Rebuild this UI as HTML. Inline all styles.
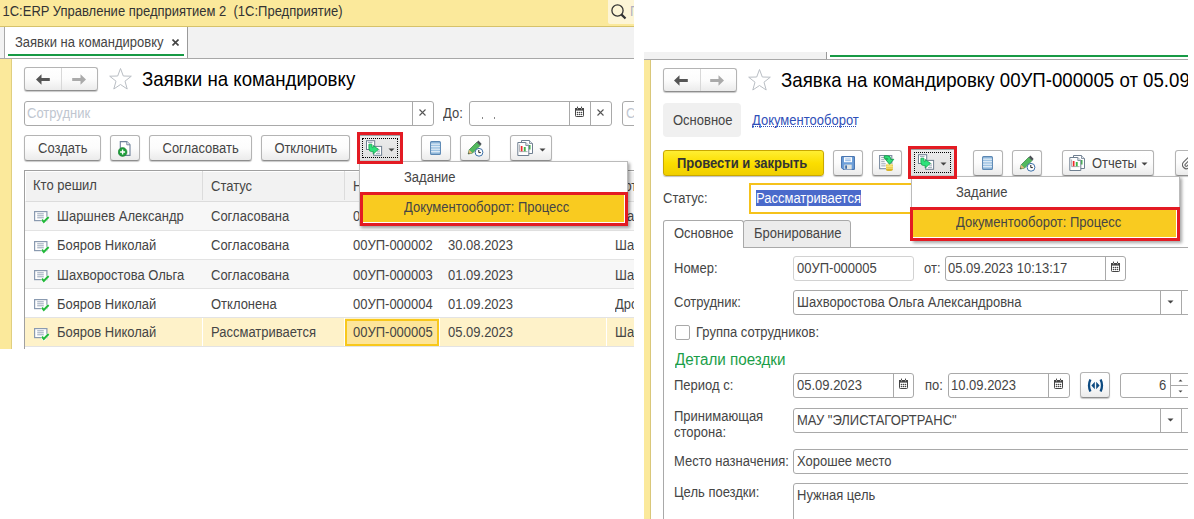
<!DOCTYPE html>
<html><head><meta charset="utf-8">
<style>
*{box-sizing:border-box;margin:0;padding:0}
html,body{width:1194px;height:519px;overflow:hidden;background:#fff;font-family:"Liberation Sans",sans-serif;font-size:13px;color:#454545}
.a{position:absolute}
.t{position:absolute;white-space:nowrap;line-height:15px;height:15px;transform:scaleY(1.08);transform-origin:0 12px}
.btn{position:absolute;border:1px solid #b4b4b4;border-bottom-color:#8e8e8e;border-radius:3px;background:linear-gradient(#fff,#fcfcfc 50%,#ebebeb);box-shadow:0 1px 1px rgba(0,0,0,.22)}
.inp{position:absolute;border:1px solid #a9a9a9;border-radius:3px;background:#fff}
.sep{position:absolute;top:0;bottom:0;width:1px;background:#a9a9a9}
</style></head>
<body>
<svg width="0" height="0" style="position:absolute"><defs>
<symbol id="docok" viewBox="0 0 17 14"><rect x="1.6" y="1.6" width="12.3" height="9" fill="#fff" stroke="#8a9ab0" stroke-width="1.2"/><path d="M4.2 3.8h6.6M4.2 5.8h6.6M4.2 7.8h6.6" stroke="#8a9ab0" stroke-width=".9"/><path d="M9 9.6 L10.8 12 L15.6 7" fill="none" stroke="#fff" stroke-width="3.2"/><path d="M9 9.6 L10.8 12 L15.6 7" fill="none" stroke="#22b83a" stroke-width="2"/></symbol>
<symbol id="xm" viewBox="0 0 7 7"><path d="M0.5 0.5L6.5 6.5M6.5 0.5L0.5 6.5" stroke="#444" stroke-width="1.6"/></symbol>
<symbol id="xs" viewBox="0 0 9 9"><path d="M1 1L8 8M8 1L1 8" stroke="#555" stroke-width="1.2"/></symbol>
<symbol id="cal" viewBox="0 0 10 11"><rect x=".5" y="2.5" width="8" height="8" rx=".8" fill="#fff" stroke="#444" stroke-width="1"/><rect x="0" y="2" width="9" height="2.6" fill="#444"/><rect x="2" y=".6" width="1" height="2" fill="#444"/><rect x="6" y=".6" width="1" height="2" fill="#444"/><rect x="2.1" y="2.4" width=".8" height=".8" fill="#fff"/><rect x="6.1" y="2.4" width=".8" height=".8" fill="#fff"/><g fill="#444"><circle cx="2.5" cy="6.5" r=".8"/><circle cx="4.5" cy="6.5" r=".8"/><circle cx="6.5" cy="6.5" r=".8"/><circle cx="2.5" cy="8.5" r=".8"/><circle cx="4.5" cy="8.5" r=".8"/><circle cx="6.5" cy="8.5" r=".8"/></g></symbol>
<symbol id="tri" viewBox="0 0 7 4"><path d="M0.5 0.5H6.5L3.5 3.5Z" fill="#444"/></symbol>
<symbol id="bp" viewBox="0 0 18 18"><rect x="1.5" y="1.7" width="8.2" height="8.8" fill="#fff" stroke="#6e7f91" stroke-width="1"/><path d="M3 3.4h4.5" stroke="#8d9bab" stroke-width=".9"/><rect x="8.7" y="7.4" width="7.9" height="8.9" fill="#fff" stroke="#6e7f91" stroke-width="1"/><path d="M12 11h3M12 12.8h3M11 14.6h4" stroke="#8d9bab" stroke-width=".8"/><path d="M3.9 5.2H6.9V8Q6.9 8.6 7.6 8.6H8V6.5L13.5 10.3L8.2 15V12.6H6.8Q3.9 12.6 3.9 9.6Z" fill="#2ee27a" stroke="#17a04e" stroke-width=".8" stroke-linejoin="round"/></symbol>
<symbol id="list" viewBox="0 0 11 14"><rect x="0.6" y="0.6" width="9.8" height="12.8" rx="1" fill="#9ec3e3" stroke="#5b87b3" stroke-width="1.1"/><path d="M1 3.2h9M1 5.7h9M1 8.2h9M1 10.7h9" stroke="#eaf2f9" stroke-width="1"/></symbol>
<symbol id="pen" viewBox="0 0 18 17"><path d="M2.2 14l1-4.2 7.6-7.6 3.3 3.3-7.6 7.6z" fill="#52b95e" stroke="#2e7d3a" stroke-width=".7"/><path d="M10.8 2.2l1.6-1.6 3.3 3.3-1.6 1.6z" fill="#4a4f55"/><path d="M2.2 14l1-4.2 3.2 3.2z" fill="#e6b97e"/><path d="M2.2 14l.4-1.6 1.2 1.2z" fill="#333"/><circle cx="13" cy="12.3" r="3.9" fill="#fff" stroke="#3a6fa8" stroke-width="1"/><path d="M12.8 10v2.6h2" fill="none" stroke="#222" stroke-width="1"/></symbol>
<symbol id="rep" viewBox="0 0 17 16"><path d="M4.5 0.5h8l3 3v10h-11z" fill="#fff" stroke="#6f7f90" stroke-width="1"/><path d="M12.5 0.5v3h3" fill="#dfe4ea" stroke="#6f7f90" stroke-width=".8"/><rect x="11.5" y="5" width="2" height="4.5" fill="#3fb548"/><path d="M0.8 2.5h8l3 3v10h-11z" fill="#fff" stroke="#6f7f90" stroke-width="1"/><path d="M8.8 2.5v3h3" fill="#dfe4ea" stroke="#6f7f90" stroke-width=".8"/><path d="M2.6 4.5V11.6H10.5" fill="none" stroke="#8a8f96" stroke-width=".7"/><rect x="3.8" y="6" width="1.7" height="5.3" fill="#ee2b2b"/><rect x="6.8" y="7" width="1.9" height="4.3" fill="#3fb548"/></symbol>
<symbol id="save" viewBox="0 0 14 14"><path d="M0.6 0.6h12.8v12.8h-11.3l-1.5-1.5z" fill="#6d9fd9" stroke="#3f6daa" stroke-width="1"/><rect x="3" y="1.2" width="8" height="5" fill="#fff"/><path d="M4.2 3h5.6M4.2 4.7h5.6" stroke="#6d9fd9" stroke-width=".8"/><rect x="3.3" y="8.6" width="7.4" height="4.8" fill="#dfe3e2"/><rect x="4.2" y="9.4" width="1.8" height="3.4" fill="#3f6daa"/></symbol>
<symbol id="post" viewBox="0 0 17 17"><rect x="0.6" y="0.5" width="12.2" height="13.2" fill="#fff" stroke="#7b8ca0" stroke-width="1.1"/><path d="M2.2 2.6h3M2.2 4.7h3.5M2.2 6.7h3.5M2.2 8.8h4.5M2.2 10.9h4.5" stroke="#8d9bab" stroke-width=".9"/><rect x="7" y="9.6" width="6.8" height="5.2" fill="#e9c93a"/><ellipse cx="10.4" cy="14.8" rx="3.4" ry="1.3" fill="#d9b52a"/><ellipse cx="10.4" cy="9.6" rx="3.4" ry="1.2" fill="#f8e58a"/><path d="M7 11.5h6.8M7 13.2h6.8" stroke="#fff3b0" stroke-width=".6"/><path d="M5.3 0.8H8.6Q11.6 0.8 11.6 3.8V4.3H14.8L10.6 9.3L6.4 4.3H8.8V4Q8.8 3.4 8.2 3.4H5.3Z" fill="#2ee27a" stroke="#139847" stroke-width=".9" stroke-linejoin="round"/></symbol>
<symbol id="docplus" viewBox="0 0 14 16"><path d="M2.3 0.6h6.5l3.2 3.2v10.6h-9.7z" fill="#fff" stroke="#6d809a" stroke-width="1.1"/><path d="M8.8 0.6v3.2h3.2" fill="#e8edf3" stroke="#6d809a" stroke-width=".9"/><circle cx="4.6" cy="11" r="4.4" fill="#1e9e3a" stroke="#157a2c" stroke-width=".6"/><path d="M4.6 8.5v5M2.1 11h5" stroke="#fff" stroke-width="1.4"/></symbol>
<symbol id="swap" viewBox="0 0 17 13"><path d="M3.4 0.6Q0.6 6.5 3.4 12.4M13.6 0.6Q16.4 6.5 13.6 12.4" fill="none" stroke="#0d4a80" stroke-width="2.3"/><path d="M7.8 2.8v7.4l-3.4-3.7z M9.2 2.8v7.4l3.4-3.7z" fill="#0d4a80"/></symbol>
</defs></svg>
<!-- ============ LEFT SCREEN ============ -->
<div class="a" style="left:0;top:0;width:634px;height:349px;overflow:hidden">
  <!-- title bar -->
  <div class="a" style="left:0;top:0;width:634px;height:27px;background:#fbe99b;border-bottom:1px solid #d6c26a"></div>
  <div class="t" style="left:2.5px;top:4px;color:#333">1C:ERP Управление предприятием 2&nbsp; (1С:Предприятие)</div>
  <div class="a" style="left:608px;top:0;width:30px;height:24px;background:#fdf5d6;border-radius:0 0 0 2px"></div>
  <div class="t" style="left:630px;top:4px;color:#b0b0c0">П</div>
  <svg class="a" style="left:610px;top:3px" width="18" height="18" viewBox="0 0 18 18"><circle cx="7.5" cy="7.5" r="5.6" fill="none" stroke="#333" stroke-width="1.3"/><path d="M11.6 11.6 L15.5 15.5" stroke="#333" stroke-width="2.2"/></svg>
  <!-- tab bar -->
  <div class="a" style="left:0;top:27px;width:634px;height:32px;background:#f2f2f2;border-bottom:1px solid #a8a8a8"></div>
  <div class="a" style="left:4px;top:27px;width:184px;height:31px;background:#fff;border-left:1px solid #a8a8a8;border-right:1px solid #9a9a9a"></div>
  <div class="a" style="left:8px;top:54px;width:176px;height:2px;background:#179a45"></div>
  <div class="t" style="left:15px;top:35px">Заявки на командировку</div>
  <svg class="a" style="left:172px;top:39px" width="7" height="7"><use href="#xm"/></svg>
  <!-- yellow strip -->
  <div class="a" style="left:0;top:59px;width:12px;height:290px;background:#fbe99b;border-right:1px solid #e0cf80"></div>
  <!-- nav -->
  <div class="btn" style="left:24px;top:67px;width:74px;height:24px"></div>
  <div class="a" style="left:61px;top:68px;width:1px;height:22px;background:#d8d8d8"></div>
  <svg class="a" style="left:35px;top:73px" width="16" height="14" viewBox="0 0 16 14"><path d="M1 6.5L6.5 1.2V5H14.8V8H6.5V11.7Z" fill="#555"/></svg>
  <svg class="a" style="left:71px;top:73px" width="16" height="14" viewBox="0 0 16 14"><path d="M15 6.5L9.5 1.2V5H1.2V8H9.5V11.7Z" fill="#aaa"/></svg>
  <svg class="a" style="left:108px;top:67px" width="25" height="24" viewBox="0 0 25 24"><path d="M12.5 1.5 L15.3 9 L23.3 9.2 L17 14.2 L19.2 22 L12.5 17.5 L5.8 22 L8 14.2 L1.7 9.2 L9.7 9 Z" fill="#fff" stroke="#b9bec4" stroke-width="1"/></svg>
  <div class="t" style="left:142px;top:69px;font-size:18.67px;line-height:22px;height:22px;color:#000;transform-origin:0 17.5px">Заявки на командировку</div>
  <!-- filters -->
  <div class="inp" style="left:24px;top:101px;width:410px;height:25px"><div class="sep" style="left:387px"></div></div>
  <div class="t" style="left:27px;top:106px;color:#c0c6d0">Сотрудник</div>
  <svg class="a" style="left:419px;top:109px" width="7" height="7" viewBox="0 0 7 7"><path d="M.5 .5l6 6M6.5 .5l-6 6" stroke="#555" stroke-width="1.1"/></svg>
  <div class="t" style="left:443px;top:106px">До:</div>
  <div class="inp" style="left:469px;top:101px;width:143px;height:25px"><div class="sep" style="left:99px"></div><div class="sep" style="left:120px"></div></div>
  <div class="a" style="left:482px;top:117px;width:1px;height:2px;background:#888"></div><div class="a" style="left:494px;top:117px;width:1px;height:2px;background:#888"></div>
  <svg class="a" style="left:575px;top:106px" width="10" height="11"><use href="#cal"/></svg>
  <svg class="a" style="left:597px;top:109px" width="7" height="7" viewBox="0 0 7 7"><path d="M.5 .5l6 6M6.5 .5l-6 6" stroke="#555" stroke-width="1.1"/></svg>
  <div class="inp" style="left:622px;top:101px;width:30px;height:25px"></div>
  <div class="t" style="left:626px;top:106px;color:#c0c6d0">С</div>
  <!-- buttons -->
  <div class="btn" style="left:24px;top:135px;width:77px;height:26px"></div>
  <div class="t" style="left:38px;top:141px">Создать</div>
  <div class="btn" style="left:110px;top:135px;width:30px;height:26px"></div>
  <svg class="a" style="left:118px;top:141px" width="14" height="16"><use href="#docplus"/></svg>
  <div class="btn" style="left:149px;top:135px;width:103px;height:26px"></div>
  <div class="t" style="left:162.5px;top:141px">Согласовать</div>
  <div class="btn" style="left:261px;top:135px;width:89px;height:26px"></div>
  <div class="t" style="left:274.5px;top:141px;letter-spacing:-0.15px">Отклонить</div>
  <div class="a" style="z-index:5;left:357px;top:132px;width:46px;height:32px;border:3px solid #e31b23;background:linear-gradient(#ececec,#e0e0e0)"><div class="a" style="left:0;top:0;right:0;height:1px;background:#9aa3a3"></div><div class="a" style="left:0;bottom:0;right:0;height:1px;background:#c8c8c8"></div><div class="a" style="left:2px;top:3px;width:36px;height:20px;border:1px dotted #000"></div></div>
  <svg class="a" style="z-index:6;left:365px;top:139px" width="18" height="18"><use href="#bp"/></svg>
  <svg class="a" style="z-index:6;left:388px;top:148px" width="7" height="4"><use href="#tri"/></svg>
  <div class="btn" style="left:421px;top:135px;width:30px;height:26px"></div>
  <svg class="a" style="left:430px;top:141px" width="11" height="14"><use href="#list"/></svg>
  <div class="btn" style="left:460px;top:135px;width:30px;height:26px"></div>
  <svg class="a" style="left:466px;top:140px" width="18" height="17"><use href="#pen"/></svg>
  <div class="btn" style="left:510px;top:135px;width:42px;height:26px"></div>
  <svg class="a" style="left:517px;top:140px" width="17" height="16"><use href="#rep"/></svg>
  <svg class="a" style="left:539px;top:148px" width="7" height="4"><use href="#tri"/></svg>
  <!-- table -->
  <div class="a" style="left:24px;top:170px;width:620px;height:180px;border-left:1px solid #a0a0a0;border-top:1px solid #a0a0a0"></div>
  <div class="a" style="left:25px;top:171px;width:620px;height:31px;background:#f2f2f2;border-top:1px solid #fff;border-left:1px solid #fff;border-bottom:1px solid #dcdcdc"></div>
  <div class="a" style="left:202px;top:171px;width:1px;height:29px;background:#dcdcdc"></div>
  <div class="a" style="left:344px;top:171px;width:1px;height:29px;background:#dcdcdc"></div>
  <div class="t" style="left:33px;top:178px">Кто решил</div>
  <div class="t" style="left:211px;top:179px">Статус</div>
  <div class="t" style="left:353px;top:179px">Номер</div>
  <div class="t" style="left:448px;top:179px">Дата</div>
  <div class="t" style="left:615px;top:179px">Сотрудник</div>
  <div class="a" style="left:25px;top:202px;width:620px;height:28px;background:#f7f7f7"></div>
  <div class="a" style="left:25px;top:230px;width:620px;height:1px;background:#e3e3e3"></div>
  <svg class="a" style="left:33px;top:210px" width="17" height="14"><use href="#docok"/></svg>
  <div class="t" style="left:57px;top:209px">Шаршнев Александр</div>
  <div class="t" style="left:211px;top:209px">Согласована</div>
  <div class="t" style="left:353px;top:209px">00УП-000001</div>
  <div class="t" style="left:448px;top:209px">28.08.2023</div>
  <div class="t" style="left:615px;top:209px">Шахворостова Ольга</div>
  <div class="a" style="left:25px;top:231px;width:620px;height:28px;background:#fff"></div>
  <div class="a" style="left:25px;top:259px;width:620px;height:1px;background:#e3e3e3"></div>
  <svg class="a" style="left:33px;top:240px" width="17" height="14"><use href="#docok"/></svg>
  <div class="t" style="left:57px;top:238px">Бояров Николай</div>
  <div class="t" style="left:211px;top:238px">Согласована</div>
  <div class="t" style="left:353px;top:238px">00УП-000002</div>
  <div class="t" style="left:448px;top:238px">30.08.2023</div>
  <div class="t" style="left:615px;top:238px">Шахворостова Ольга</div>
  <div class="a" style="left:25px;top:260px;width:620px;height:28px;background:#f7f7f7"></div>
  <div class="a" style="left:25px;top:288px;width:620px;height:1px;background:#e3e3e3"></div>
  <svg class="a" style="left:33px;top:269px" width="17" height="14"><use href="#docok"/></svg>
  <div class="t" style="left:57px;top:268px">Шахворостова Ольга</div>
  <div class="t" style="left:211px;top:268px">Согласована</div>
  <div class="t" style="left:353px;top:268px">00УП-000003</div>
  <div class="t" style="left:448px;top:268px">01.09.2023</div>
  <div class="t" style="left:615px;top:268px">Шахворостова Ольга</div>
  <div class="a" style="left:25px;top:289px;width:620px;height:28px;background:#fff"></div>
  <div class="a" style="left:25px;top:317px;width:620px;height:1px;background:#e3e3e3"></div>
  <svg class="a" style="left:33px;top:298px" width="17" height="14"><use href="#docok"/></svg>
  <div class="t" style="left:57px;top:297px">Бояров Николай</div>
  <div class="t" style="left:211px;top:297px">Отклонена</div>
  <div class="t" style="left:353px;top:297px">00УП-000004</div>
  <div class="t" style="left:448px;top:297px">01.09.2023</div>
  <div class="t" style="left:615px;top:297px">Дроздов</div>
  <div class="a" style="left:25px;top:318px;width:620px;height:28px;background:#fef2c9"></div>
  <div class="a" style="left:25px;top:346px;width:620px;height:1px;background:#e3e3e3"></div>
  <div class="a" style="left:202px;top:318px;width:1px;height:28px;background:#fff"></div>
  <div class="a" style="left:344px;top:318px;width:1px;height:28px;background:#fff"></div>
  <div class="a" style="left:345px;top:319px;width:94px;height:27px;background:#fde59a;border:2px solid #f8c81c"></div>
  <div class="a" style="left:439px;top:318px;width:1px;height:28px;background:#fff"></div>
  <div class="a" style="left:606px;top:318px;width:1px;height:28px;background:#fff"></div>
  <svg class="a" style="left:33px;top:327px" width="17" height="14"><use href="#docok"/></svg>
  <div class="t" style="left:57px;top:325px">Бояров Николай</div>
  <div class="t" style="left:211px;top:325px">Рассматривается</div>
  <div class="t" style="left:353px;top:325px">00УП-000005</div>
  <div class="t" style="left:448px;top:325px">05.09.2023</div>
  <div class="t" style="left:615px;top:325px">Шахворостова Ольга</div>
  <!-- popup -->
  <div class="a" style="left:359px;top:161px;width:269px;height:65px;background:#fff;border:1px solid #bbb;box-shadow:2px 2px 3px rgba(0,0,0,.35)"></div>
  <div class="t" style="left:404px;top:170px">Задание</div>
  <div class="a" style="left:360px;top:192px;width:268px;height:34px;background:#f9cb20;border:3px solid #e31b23;box-shadow:inset -1px -1px 0 #fff"></div>
  <div class="t" style="left:404px;top:200px">Документооборот: Процесс</div>
</div>

<!-- ============ RIGHT SCREEN ============ -->
<div class="a" style="left:0;top:0;width:1194px;height:519px;clip-path:inset(52px 6px 0 644px)">
  <!-- tab bar -->
  <div class="a" style="left:644px;top:52px;width:550px;height:8px;background:#f2f2f2;border-bottom:1px solid #a8a8a8"></div>
  <div class="a" style="left:826px;top:52px;width:1px;height:7px;background:#9a9a9a"></div>
  <div class="a" style="left:827px;top:52px;width:370px;height:7px;background:#fff"></div>
  <div class="a" style="left:830px;top:55px;width:360px;height:2px;background:#179a45"></div>
  <!-- yellow strip -->
  <div class="a" style="left:644px;top:60px;width:7px;height:460px;background:#fbe99b;border-right:1px solid #d9c77a"></div>
  <!-- nav -->
  <div class="btn" style="left:663px;top:68px;width:74px;height:24px"></div>
  <div class="a" style="left:700px;top:69px;width:1px;height:22px;background:#d8d8d8"></div>
  <svg class="a" style="left:673px;top:74px" width="16" height="14" viewBox="0 0 16 14"><path d="M1 6.5L6.5 1.2V5H14.8V8H6.5V11.7Z" fill="#555"/></svg>
  <svg class="a" style="left:709px;top:74px" width="16" height="14" viewBox="0 0 16 14"><path d="M15 6.5L9.5 1.2V5H1.2V8H9.5V11.7Z" fill="#aaa"/></svg>
  <svg class="a" style="left:747px;top:68px" width="25" height="24" viewBox="0 0 25 24"><path d="M12.5 1.5 L15.3 9 L23.3 9.2 L17 14.2 L19.2 22 L12.5 17.5 L5.8 22 L8 14.2 L1.7 9.2 L9.7 9 Z" fill="#fff" stroke="#b9bec4" stroke-width="1"/></svg>
  <div class="t" style="left:781px;top:70px;font-size:18.67px;line-height:22px;height:22px;color:#000;transform-origin:0 17.5px">Заявка на командировку 00УП-000005 от 05.09.2023 10:13:17</div>
  <!-- top tabs -->
  <div class="a" style="left:663px;top:103px;width:78px;height:34px;background:#f0f0f0;border-radius:4px"></div>
  <div class="t" style="left:673px;top:113px">Основное</div>
  <div class="t" style="left:752px;top:113px;color:#2f4fb8">Документооборот</div>
  <div class="a" style="left:752px;top:126px;width:104px;height:1px;border-top:1px dotted #2f4fb8"></div>
  <!-- buttons -->
  <div class="a" style="left:663px;top:150px;width:161px;height:26px;border:1px solid #c9a800;border-radius:3px;background:linear-gradient(#ffee33,#fbde00 50%,#f0cf00);box-shadow:0 1px 1px rgba(0,0,0,.25)"></div>
  <div class="t" style="left:677px;top:156px;font-weight:bold;color:#333">Провести и закрыть</div>
  <div class="btn" style="left:833px;top:150px;width:30px;height:26px"></div>
  <svg class="a" style="left:841px;top:156px" width="14" height="14"><use href="#save"/></svg>
  <div class="btn" style="left:872px;top:150px;width:30px;height:26px"></div>
  <svg class="a" style="left:879px;top:155px" width="17" height="17"><use href="#post"/></svg>
  <div class="a" style="z-index:5;left:908px;top:146px;width:49px;height:33px;border:3px solid #e31b23;background:linear-gradient(#ececec,#e0e0e0)"><div class="a" style="left:0;top:0;right:0;height:1px;background:#9aa3a3"></div><div class="a" style="left:0;bottom:0;right:0;height:1px;background:#c8c8c8"></div><div class="a" style="left:3px;top:3px;width:37px;height:21px;border:1px dotted #000"></div></div>
  <svg class="a" style="z-index:6;left:917px;top:153px" width="18" height="18"><use href="#bp"/></svg>
  <svg class="a" style="z-index:6;left:940px;top:162px" width="7" height="4"><use href="#tri"/></svg>
  <div class="btn" style="left:973px;top:150px;width:30px;height:26px"></div>
  <svg class="a" style="left:982px;top:156px" width="11" height="14"><use href="#list"/></svg>
  <div class="btn" style="left:1012px;top:150px;width:30px;height:26px"></div>
  <svg class="a" style="left:1018px;top:155px" width="18" height="17"><use href="#pen"/></svg>
  <div class="btn" style="left:1062px;top:150px;width:92px;height:26px"></div>
  <svg class="a" style="left:1069px;top:155px" width="17" height="16"><use href="#rep"/></svg>
  <svg class="a" style="left:1141px;top:162px" width="7" height="4"><use href="#tri"/></svg>
  <div class="t" style="left:1092px;top:156px">Отчеты</div>
  <div class="btn" style="left:1175px;top:150px;width:30px;height:26px"></div>
  <svg class="a" style="left:1182px;top:156px" width="10" height="14" viewBox="0 0 10 14"><path d="M7 4.5L3.2 8.3a1.3 1.3 0 0 0 1.8 1.8L9 6.1a2.6 2.6 0 0 0-3.7-3.7L1.5 6.2a3.9 3.9 0 0 0 5.5 5.5" fill="none" stroke="#666" stroke-width="1.1"/></svg>
  <!-- status -->
  <div class="t" style="left:663px;top:191px">Статус:</div>
  <div class="a" style="left:749px;top:183px;width:425px;height:31px;border:2px solid #f5c21b;background:#fff"></div>
  <div class="a" style="left:756px;top:190px;width:105px;height:16px;background:#4a6acb"></div>
  <div class="t" style="left:756px;top:191px;color:#fff">Рассматривается</div>
  <!-- tabs -->
  <div class="a" style="left:663px;top:247px;width:540px;height:272px;border-left:1px solid #a9a9a9;border-top:1px solid #a9a9a9;background:#fff"></div>
  <div class="a" style="left:663px;top:220px;width:81px;height:28px;border:1px solid #a9a9a9;border-bottom:none;border-radius:3px 3px 0 0;background:#fff"></div><div class="a" style="left:664px;top:247px;width:79px;height:1px;background:#fff"></div>
  <div class="a" style="left:743px;top:220px;width:108px;height:28px;border:1px solid #a9a9a9;border-radius:3px 3px 0 0;background:#ececec"></div>
  <div class="t" style="left:674px;top:226px">Основное</div>
  <div class="t" style="left:754px;top:226px">Бронирование</div>
  <!-- form -->
  <div class="t" style="left:674px;top:261px">Номер:</div>
  <div class="inp" style="left:793px;top:256px;width:121px;height:25px;border-color:#d2d2d2"></div>
  <div class="t" style="left:797px;top:261px">00УП-000005</div>
  <div class="t" style="left:924px;top:261px">от:</div>
  <div class="inp" style="left:945px;top:256px;width:181px;height:25px"><div class="sep" style="left:159px"></div></div>
  <div class="t" style="left:948px;top:261px">05.09.2023 10:13:17</div>
  <svg class="a" style="left:1111px;top:261px" width="10" height="11"><use href="#cal"/></svg>
  <div class="t" style="left:674px;top:295px">Сотрудник:</div>
  <div class="inp" style="left:793px;top:290px;width:420px;height:25px"><div class="sep" style="left:366px"></div><div class="sep" style="left:387px"></div></div>
  <div class="t" style="left:797px;top:295px">Шахворостова Ольга Александровна</div>
  <svg class="a" style="left:1167px;top:300px" width="7" height="4"><use href="#tri"/></svg>
  <div class="a" style="left:675px;top:325px;width:15px;height:15px;border:1px solid #a9a9a9;border-radius:2px;background:#fff"></div>
  <div class="t" style="left:696px;top:325px">Группа сотрудников:</div>
  <div class="t" style="left:675px;top:351px;font-size:15.2px;line-height:17px;height:17px;color:#1a9e48">Детали поездки</div>
  <div class="t" style="left:674px;top:378px">Период с:</div>
  <div class="inp" style="left:793px;top:373px;width:121px;height:25px"><div class="sep" style="left:99px"></div></div>
  <div class="t" style="left:797px;top:378px">05.09.2023</div>
  <svg class="a" style="left:899px;top:378px" width="10" height="11"><use href="#cal"/></svg>
  <div class="t" style="left:925px;top:378px">по:</div>
  <div class="inp" style="left:948px;top:373px;width:122px;height:25px"><div class="sep" style="left:99px"></div></div>
  <div class="t" style="left:951px;top:378px">10.09.2023</div>
  <svg class="a" style="left:1054px;top:378px" width="10" height="11"><use href="#cal"/></svg>
  <div class="btn" style="left:1080px;top:372px;width:30px;height:26px"></div>
  <svg class="a" style="left:1087px;top:379px" width="17" height="13"><use href="#swap"/></svg>
  <div class="inp" style="left:1120px;top:373px;width:90px;height:25px"><div class="sep" style="left:49px"></div><div class="a" style="left:49px;top:11px;width:40px;height:1px;background:#a9a9a9"></div></div>
  <svg class="a" style="left:1178px;top:379px" width="5" height="3" viewBox="0 0 5 3"><path d="M0.5 2.5H4.5L2.5 0.5Z" fill="#444"/></svg>
  <svg class="a" style="left:1178px;top:390px" width="5" height="3" viewBox="0 0 5 3"><path d="M0.5 0.5H4.5L2.5 2.5Z" fill="#444"/></svg>
  <div class="t" style="left:1159px;top:378px">6</div>
  <div class="t" style="left:674px;top:409px">Принимающая</div>
  <div class="t" style="left:674px;top:425px">сторона:</div>
  <div class="inp" style="left:793px;top:408px;width:420px;height:25px"><div class="sep" style="left:366px"></div><div class="sep" style="left:387px"></div></div>
  <div class="t" style="left:797px;top:413px">МАУ "ЭЛИСТАГОРТРАНС"</div>
  <svg class="a" style="left:1167px;top:418px" width="7" height="4"><use href="#tri"/></svg>
  <div class="t" style="left:674px;top:454px">Место назначения:</div>
  <div class="inp" style="left:793px;top:449px;width:420px;height:25px"></div>
  <div class="t" style="left:797px;top:454px">Хорошее место</div>
  <div class="t" style="left:674px;top:485px">Цель поездки:</div>
  <div class="inp" style="left:793px;top:483px;width:420px;height:60px"></div>
  <div class="t" style="left:797px;top:488px">Нужная цель</div>
  <!-- popup -->
  <div class="a" style="left:911px;top:176px;width:269px;height:65px;background:#fff;border:1px solid #bbb;box-shadow:2px 2px 3px rgba(0,0,0,.35)"></div>
  <div class="t" style="left:956px;top:185px">Задание</div>
  <div class="a" style="left:910px;top:207px;width:270px;height:34px;background:#f9cb20;border:3px solid #e31b23;box-shadow:inset -1px -1px 0 #fff"></div>
  <div class="t" style="left:956px;top:215px">Документооборот: Процесс</div>
</div>
</body></html>
